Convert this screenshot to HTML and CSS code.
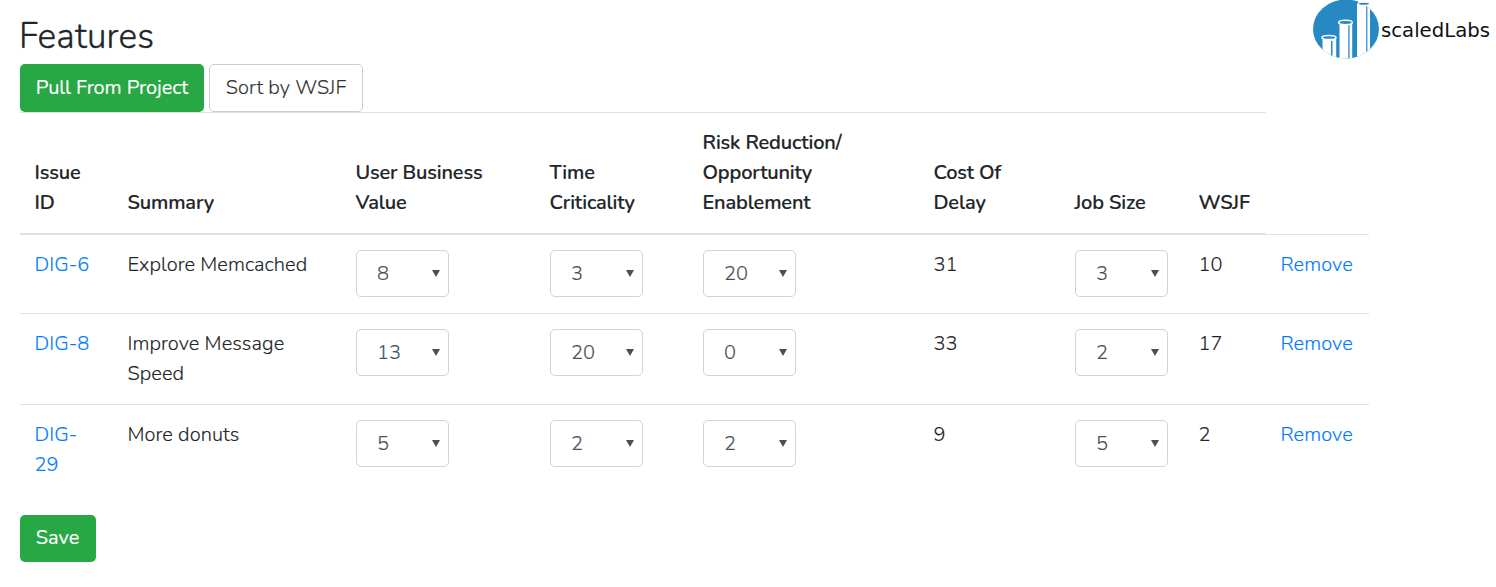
FILE: index.html
```html
<!DOCTYPE html>
<html lang="en">
<head>
<meta charset="utf-8">
<title>Features</title>
<link rel="stylesheet" href="styles.css">
</head>
<body>
<main class="page">
  <header class="top">
    <div>
      <h1 class="title">Features</h1>
      <div class="actions">
        <button class="btn btn-green pull">Pull From Project</button>
        <button class="btn btn-outline">Sort by WSJF</button>
      </div>
    </div>
    <svg class="logo" width="184" height="62" viewBox="0 0 184 62" role="img" aria-label="scaledLabs">
      <defs><clipPath id="disc"><ellipse cx="34" cy="29" rx="33" ry="29.5"/></clipPath></defs>
      <g clip-path="url(#disc)">
        <rect width="70" height="62" fill="#2789c4"/>
        <path fill="#fff" d="M10.500 38h13.700v24H10.500zM27.500 23h12.700v39H27.500zM45 4h13v58H45z"/>
        <path fill="#2789c4" d="M19 41h1.500v21H19zM36.300 25h1.300v37h-1.300zM54.200 5h1.200v57h-1.200z"/>
      </g>
      <g fill="#2789c4" stroke="#fff" stroke-width="1.500">
        <ellipse cx="17" cy="37.500" rx="7" ry="2"/>
        <ellipse cx="33.500" cy="22.500" rx="6.800" ry="2.200"/>
        <ellipse cx="52" cy="3.800" rx="5.800" ry="1.700"/>
      </g>
      <text class="brand" x="69" y="37" textLength="109" lengthAdjust="spacingAndGlyphs">scaledLabs</text>
    </svg>
  </header>
  <table class="features">
    <colgroup><col class="c-id"><col class="c-summary"><col class="c-value"><col class="c-time"><col class="c-risk"><col class="c-cost"><col class="c-size"><col class="c-wsjf"><col class="c-remove"></colgroup>
    <thead><tr>
      <th>Issue<br>ID</th><th>Summary</th><th>User Business<br>Value</th><th>Time<br>Criticality</th><th>Risk Reduction/<br>Opportunity<br>Enablement</th><th>Cost Of<br>Delay</th><th>Job Size</th><th>WSJF</th><td class="blank"></td>
    </tr></thead>
    <tbody>
      <tr>
        <td><a>DIG-6</a></td><td>Explore Memcached</td>
        <td><div class="select">8</div></td><td><div class="select">3</div></td><td><div class="select">20</div></td>
        <td>31</td><td><div class="select">3</div></td><td>10</td><td><a>Remove</a></td>
      </tr>
      <tr>
        <td><a>DIG-8</a></td><td>Improve Message<br>Speed</td>
        <td><div class="select">13</div></td><td><div class="select">20</div></td><td><div class="select">0</div></td>
        <td>33</td><td><div class="select">2</div></td><td>17</td><td><a>Remove</a></td>
      </tr>
      <tr>
        <td><a>DIG-<br>29</a></td><td>More donuts</td>
        <td><div class="select">5</div></td><td><div class="select">2</div></td><td><div class="select">2</div></td>
        <td>9</td><td><div class="select">5</div></td><td>2</td><td><a>Remove</a></td>
      </tr>
    </tbody>
  </table>
  <button class="btn btn-green save">Save</button>
</main>
</body>
</html>
```
FILE: styles.css
```css
* { box-sizing: border-box; }
body {
  margin: 0;
  background: #fff;
  color: #212529;
  font: 300 20px/30px Nunito, Lato, sans-serif;
  letter-spacing: 0.07px;
  -webkit-text-stroke: 0.15px;
}
.page { padding: 0 0 0 20px; }
.top {
  display: flex;
  justify-content: space-between;
  align-items: flex-start;
  height: 112px;
}
.title {
  margin: 0 0 0 -1px;
  padding-top: 15px;
  height: 64px;
  font-size: 35.200px;
  font-weight: 300;
  line-height: 43px;
  letter-spacing: 0.2px;
  -webkit-text-stroke: 0.35px;
}
.actions { display: flex; gap: 5px; }
.btn {
  height: 48px;
  padding: 0;
  border: 1px solid transparent;
  border-radius: 5px;
  font: inherit;
}
.btn-green { background: #28a745; color: #fff; font-weight: 400; letter-spacing: -0.1px; }
.btn-outline { width: 154px; background: #fff; border-color: #ccc; color: #333; letter-spacing: 0.1px; }
.pull { width: 184px; }
.save { display: block; width: 76px; height: 47px; margin-top: 20px; padding: 0 1px 2px 0; letter-spacing: 0; }
.logo { display: block; }
.brand { font: 20px "DejaVu Sans Condensed", "DejaVu Sans", sans-serif; fill: #111; letter-spacing: 0; -webkit-text-stroke: 0; }
.features {
  width: 1349px;
  table-layout: fixed;
  border-spacing: 0;
}
.c-id { width: 93px; }
.c-summary { width: 228px; }
.c-value { width: 194px; }
.c-time { width: 153px; }
.c-risk { width: 231px; }
.c-cost { width: 141px; }
.c-size { width: 124px; }
.c-wsjf { width: 82px; }
.c-remove { width: 103px; }
th {
  height: 123px;
  padding: 14px 0 15px 14.500px;
  border-top: 1px solid #dee2e6;
  border-bottom: 2px solid #dee2e6;
  text-align: left;
  vertical-align: bottom;
  font-weight: 600;
  letter-spacing: -0.16px;
}
td {
  height: 91px;
  padding: 15px 0 14px 14.500px;
  border-top: 1px solid #dee2e6;
  vertical-align: top;
}
td.blank { height: auto; border-top: 0; border-bottom: 1px solid #dee2e6; }
tbody tr:first-child td { height: 78px; border-top: 0; }
a { color: #007bff; }
.select {
  display: flex;
  justify-content: space-between;
  align-items: center;
  width: 93px;
  height: 47px;
  margin-left: 0.500px;
  padding: 1px 8px 0 20px;
  border: 1px solid #ced4da;
  border-radius: 5px;
  color: #495057;
}
.select::after {
  content: "";
  margin-top: -1px;
  border: solid transparent;
  border-width: 7px 4px 0;
  border-top-color: #495057;
}
```
